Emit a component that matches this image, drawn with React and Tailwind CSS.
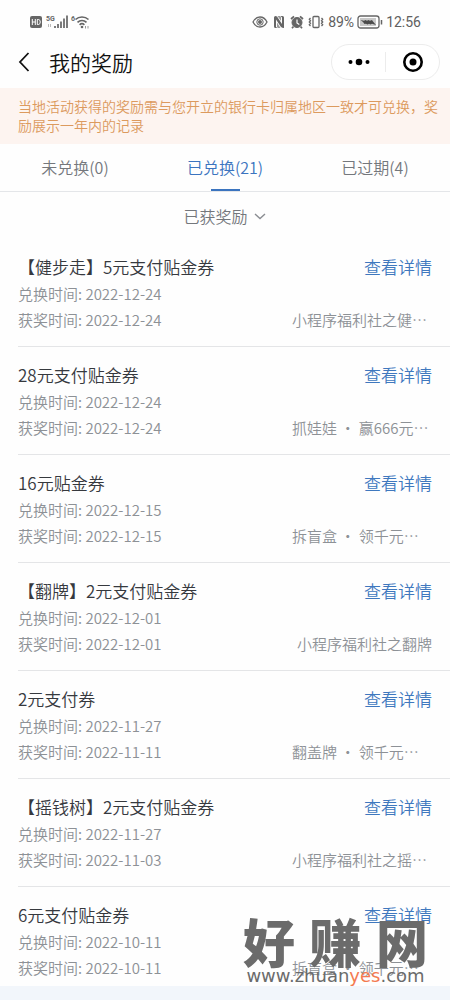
import React, { useState } from 'react';

const TABS = [
  { key: 'pending', label: '未兑换', count: 0 },
  { key: 'redeemed', label: '已兑换', count: 21 },
  { key: 'expired', label: '已过期', count: 4 },
];

const REWARDS = [
  { title: '【健步走】5元支付贴金券', redeemed: '2022-12-24', won: '2022-12-24', source: '小程序福利社之健…' },
  { title: '28元支付贴金券', redeemed: '2022-12-24', won: '2022-12-24', source: '抓娃娃 ・ 赢666元…' },
  { title: '16元贴金券', redeemed: '2022-12-15', won: '2022-12-15', source: '拆盲盒 ・ 领千元…' },
  { title: '【翻牌】2元支付贴金券', redeemed: '2022-12-01', won: '2022-12-01', source: '小程序福利社之翻牌' },
  { title: '2元支付券', redeemed: '2022-11-27', won: '2022-11-11', source: '翻盖牌 ・ 领千元…' },
  { title: '【摇钱树】2元支付贴金券', redeemed: '2022-11-27', won: '2022-11-03', source: '小程序福利社之摇…' },
  { title: '6元支付贴金券', redeemed: '2022-10-11', won: '2022-10-11', source: '拆盲盒 ・ 领千元…' },
];

function SignalIcons() {
  return (
    <svg width="62" height="20" viewBox="0 0 62 20" fill="none" aria-hidden="true">
      <rect x="1" y="4" width="12" height="12" rx="2" fill="#666" />
      <path d="M3.300 7v6M6.300 7v6M3.300 10h3M8.300 7.500v5h1c1.300 0 1.900-1 1.900-2.500s-.6-2.500-1.900-2.500z" stroke="#fff" strokeWidth="1" />
      <text x="17" y="9" fontSize="7" fontWeight="700" fill="#666" fontFamily="Roboto, sans-serif">5G</text>
      <path d="M19.500 12v3M21.500 12v3" stroke="#bbb" strokeWidth="1" />
      <path d="M26 14v2M29 12v4M32 9.500v6.500M35 6.500v9.500M38 3.500v12.500" stroke="#666" strokeWidth="1.700" />
      <text x="42" y="9" fontSize="7" fontWeight="700" fill="#666" fontFamily="Roboto, sans-serif">6</text>
      <path d="M46.500 7.500a9.500 9.500 0 0 1 13 0M48.500 10.300a6.500 6.500 0 0 1 9 0M50.600 12.800a3.500 3.500 0 0 1 4.800 0" stroke="#666" strokeWidth="1.600" />
      <circle cx="53" cy="15" r="1.300" fill="#666" />
      <path d="M56.500 14v2.500M59 14v2.500" stroke="#999" strokeWidth="1" />
    </svg>
  );
}

function EyeIcon() {
  return (
    <svg width="16" height="16" viewBox="0 0 16 16" fill="none" stroke="#666" aria-hidden="true">
      <path d="M1 8c1.700-3.300 4-5 7-5s5.300 1.700 7 5c-1.700 3.300-4 5-7 5S2.700 11.300 1 8z" strokeWidth="1.300" />
      <circle cx="8" cy="8" r="3.200" strokeWidth="1" />
      <circle cx="8" cy="8" r="2" fill="#666" stroke="none" />
    </svg>
  );
}

function NfcIcon() {
  return (
    <svg width="12" height="16" viewBox="0 0 12 16" aria-hidden="true">
      <path d="M1 3.500Q1 2 2.500 2L4 2.500 9 10V3.500L7.500 2h2Q11 2 11 3.500v10Q11 14 10 14L8 13 3 5.500V13l1.500 1h-2Q1 14 1 12.500z" fill="#666" />
      <path d="M4.500 2H7L8 3v4zM4 8.500l3.500 5.500H5L4 13z" fill="#999" />
    </svg>
  );
}

function AlarmIcon() {
  return (
    <svg width="14" height="16" viewBox="0 0 14 16" fill="none" stroke="#666" aria-hidden="true">
      <circle cx="7" cy="8.500" r="5" fill="#666" />
      <path d="M1 5l3-2.700M13 5l-3-2.700M3.500 12.500L2 14.300M10.500 12.500l1.500 1.800" strokeWidth="1.700" />
      <path d="M7 5.500V9l2.300 1.500" stroke="#fff" strokeWidth="1.200" />
    </svg>
  );
}

function VibrateIcon() {
  return (
    <svg width="18" height="16" viewBox="0 0 18 16" fill="none" stroke="#666" aria-hidden="true">
      <rect x="6" y="2.500" width="6" height="11" rx="1" strokeWidth="1.300" />
      <path d="M3.500 4L2.300 5.300 3.500 6.700 2.300 8l1.200 1.300-1.200 1.400L3.500 12M14.500 4l1.200 1.300-1.200 1.400L15.700 8l-1.200 1.300 1.200 1.400L14.500 12" strokeWidth="1.300" />
    </svg>
  );
}

function BatteryIcon() {
  return (
    <svg width="26" height="16" viewBox="0 0 26 16" fill="none" aria-hidden="true">
      <rect x="1" y="2" width="21" height="12" rx="2.500" stroke="#666" strokeWidth="1.300" />
      <rect x="3" y="4" width="16" height="8" fill="#c8c8c8" />
      <path d="M3.500 6l3.500.8 1.500-.8 1.500.8 1.500-.8 1.500.8L15 6l1 1.500 3 3.500-4-1.200-1.500.7-1.500-.8-1.500.8-1.500-.8-1.500.3L6 8z" fill="#4b4b4b" />
      <path d="M24.500 6v4.500" stroke="#666" strokeWidth="1.500" />
    </svg>
  );
}

function StatusBar() {
  return (
    <div className="flex h-11 items-center justify-between px-[29px] font-[Roboto,sans-serif] text-sm font-normal text-[#606060]">
      <SignalIcons />
      <div className="flex items-center gap-[3px]">
        <div className="flex items-center gap-[5px]">
          <EyeIcon />
          <NfcIcon />
          <AlarmIcon />
        </div>
        <VibrateIcon />
        <span>89%</span>
        <BatteryIcon />
        <span>12:56</span>
      </div>
    </div>
  );
}

function Header() {
  return (
    <header className="flex h-11 items-start justify-between pl-4 pr-[10px]">
      <div className="flex h-9 items-center gap-4">
        <button type="button" aria-label="返回">
          <svg width="17" height="22" viewBox="0 0 17 22" fill="none" stroke="#111" strokeWidth="1.800">
            <path d="M12.500 2L4 11l8.500 9" />
          </svg>
        </button>
        <h1 className="text-[21px] leading-8 text-[#111]">我的奖励</h1>
      </div>
      <div className="flex h-9 w-[109px] items-center rounded-full border border-[#ececec] bg-white">
        <button type="button" aria-label="更多" className="flex flex-1 justify-center">
          <svg width="24" height="10" viewBox="0 0 24 10" fill="#000">
            <circle cx="3.500" cy="5" r="2" />
            <circle cx="12" cy="5" r="3.300" />
            <circle cx="20.500" cy="5" r="2" />
          </svg>
        </button>
        <span className="h-5 w-px bg-[#ececec]" />
        <button type="button" aria-label="关闭" className="flex flex-1 justify-center">
          <svg width="22" height="22" viewBox="0 0 22 22" fill="none">
            <circle cx="11" cy="11" r="8.700" stroke="#000" strokeWidth="2.600" />
            <circle cx="11" cy="11" r="3.500" fill="#000" />
          </svg>
        </button>
      </div>
    </header>
  );
}

function RewardItem({ reward }) {
  const isCut = reward.source.endsWith('…');

  return (
    <li className="border-b border-[#e4e5e7] pt-[14px] pr-[18px] pb-[13px] last:border-b-0 last:pb-[5px]">
      <div className="flex items-center justify-between text-[17px] leading-7">
        <h2 className="text-[#36393e]">{reward.title}</h2>
        <a href="#detail" className="text-[#3f78be]">查看详情</a>
      </div>
      <p className="text-[15px] leading-[26px] text-[#8d9196]">兑换时间: {reward.redeemed}</p>
      <div className="flex justify-between text-[15px] leading-[26px] text-[#8d9196]">
        <p>获奖时间: {reward.won}</p>
        <p className={isCut ? 'w-[140px] whitespace-nowrap' : 'whitespace-nowrap'}>{reward.source}</p>
      </div>
    </li>
  );
}

function Watermark() {
  return (
    <div className="pointer-events-none absolute right-[22px] bottom-4 w-[185px] text-[#6b6b6b]">
      <div className="flex items-center justify-between pb-1 text-[52px] leading-[46px] font-black">
        <span>好</span>
        <span>赚</span>
        <span>网</span>
      </div>
      <p className="text-center font-['DejaVu_Sans',sans-serif] text-lg leading-4 font-normal">
        www.zhuan<span className="text-[#f47a50]">yes</span>.com
      </p>
    </div>
  );
}

function App() {
  const [tab, setTab] = useState('redeemed');

  return (
    <div
      lang="zh-CN"
      className="relative flex min-h-screen flex-col bg-[#f2f6fb] font-['Noto_Sans_CJK_SC',sans-serif] font-[350]"
    >
      <div className="bg-[#fefefe]">
        <StatusBar />
        <Header />

        <p className="bg-[#fdf4f0] py-[9px] pr-2 pl-[18px] text-sm leading-[19px] text-[#dc9a5e]">
          当地活动获得的奖励需与您开立的银行卡归属地区一致才可兑换，奖励展示一年内的记录
        </p>

        <nav className="grid grid-cols-3 border-b border-[#e4e6e9]">
          {TABS.map((t) => (
            <button
              key={t.key}
              type="button"
              onClick={() => setTab(t.key)}
              className={`flex flex-col items-center gap-[10px] pt-[11px] text-base ${tab === t.key ? 'text-[#3b74bf]' : 'text-[#74777c]'}`}
            >
              <span>{t.label}({t.count})</span>
              <span className={`h-[2px] w-[29px] ${tab === t.key ? 'bg-[#3b74bf]' : ''}`} />
            </button>
          ))}
        </nav>

        <div className="flex h-[47px] items-center justify-center gap-1 text-[#74777c]">
          <select aria-label="奖励类型" className="appearance-none bg-transparent text-base">
            <option>已获奖励</option>
          </select>
          <svg width="14" height="10" viewBox="0 0 14 10" fill="none" stroke="#8a8d92" strokeWidth="1.400" aria-hidden="true">
            <path d="M2 3l5 4.500L12 3" />
          </svg>
        </div>

        <ul className="pl-[18px]">
          {REWARDS.map((reward, i) => (
            <RewardItem key={i} reward={reward} />
          ))}
        </ul>
      </div>

      <Watermark />
    </div>
  );
}

export default App;
